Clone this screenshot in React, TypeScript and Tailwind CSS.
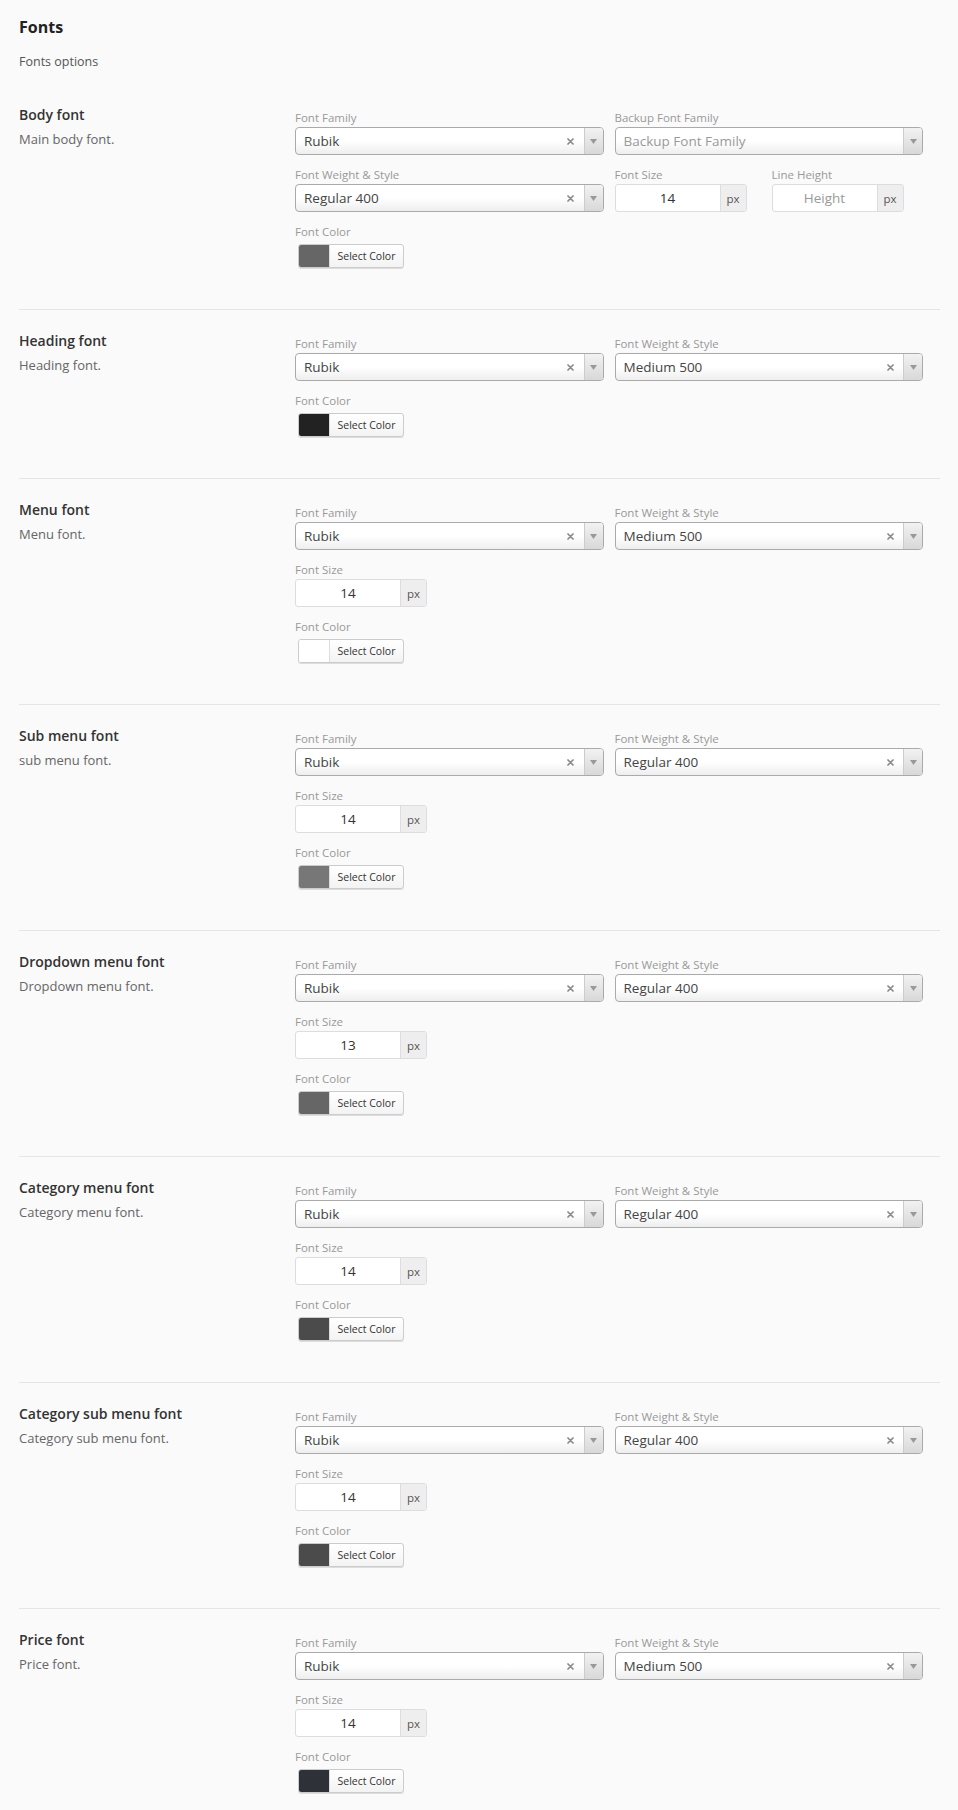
import { ReactNode } from 'react';

type Section = {
  title: string;
  desc: string;
  weight: string;
  size?: string;
  color: string;
};

const sections: Section[] = [
  { title: 'Heading font', desc: 'Heading font.', weight: 'Medium 500', color: '#222222' },
  { title: 'Menu font', desc: 'Menu font.', weight: 'Medium 500', size: '14', color: '#ffffff' },
  { title: 'Sub menu font', desc: 'sub menu font.', weight: 'Regular 400', size: '14', color: '#777777' },
  { title: 'Dropdown menu font', desc: 'Dropdown menu font.', weight: 'Regular 400', size: '13', color: '#666666' },
  { title: 'Category menu font', desc: 'Category menu font.', weight: 'Regular 400', size: '14', color: '#4b4b4b' },
  { title: 'Category sub menu font', desc: 'Category sub menu font.', weight: 'Regular 400', size: '14', color: '#4b4b4b' },
  { title: 'Price font', desc: 'Price font.', weight: 'Medium 500', size: '14', color: '#2e3238' },
];

function Field({ label, children }: { label: string; children: ReactNode }) {
  return (
    <div className="mb-[11px]">
      <div className="text-[11.5px] leading-[18px] text-[#999]">{label}</div>
      {children}
    </div>
  );
}

function Select({ value, placeholder = false, clear = true }: { value: string; placeholder?: boolean; clear?: boolean }) {
  return (
    <div className="flex h-[28px] items-stretch overflow-hidden rounded-[4px] border border-[#aaa] bg-[linear-gradient(to_bottom,#ffffff_50%,#eeeeee_100%)]">
      <span className={`flex-1 truncate pl-[8px] text-[13.5px] leading-[26px] ${placeholder ? 'text-[#999]' : 'text-[#444]'}`}>{value}</span>
      {clear && (
        <span className="flex w-[24px] items-center justify-center pt-[1px] pr-[2px]">
          <svg width="7" height="7" viewBox="0 0 7 7">
            <path d="M1 1l5 5M6 1l-5 5" stroke="#8a8a8a" strokeWidth="1.7" strokeLinecap="round" />
          </svg>
        </span>
      )}
      <span className="flex w-[19px] items-center justify-center border-l border-[#ccc] bg-[linear-gradient(to_bottom,#f2f2f2,#d8d8d8)]">
        <svg width="7" height="5" viewBox="0 0 7 5">
          <path d="M0 0h7L3.5 5z" fill="#999" />
        </svg>
      </span>
    </div>
  );
}

function PxInput({ value, placeholder = false }: { value: string; placeholder?: boolean }) {
  return (
    <div className="flex h-[28px] w-[132px] overflow-hidden rounded-[3px] border border-[#ddd] bg-white">
      <span className={`flex-1 text-center text-[13.5px] leading-[26px] ${placeholder ? 'text-[#999]' : 'text-[#333]'}`}>{value}</span>
      <span className="w-[26px] border-l border-[#ddd] bg-[#eee] text-center text-[11.5px] leading-[28px] text-[#555]">px</span>
    </div>
  );
}

function ColorButton({ color }: { color: string }) {
  return (
    <div className="ml-[3px] mt-[3px] flex h-[24px] w-[106px] overflow-hidden rounded-[3px] border border-[#ccc] bg-[linear-gradient(to_bottom,#ffffff,#f3f3f3)] shadow-[0_1px_0_#ddd]">
      <span className="w-[31px] border-r border-[#ddd]" style={{ backgroundColor: color }} />
      <span className="flex-1 text-center text-[10.5px] leading-[22px] text-[#333]">Select Color</span>
    </div>
  );
}

function Row({ title, desc, children, first = false }: { title: string; desc: string; children: ReactNode; first?: boolean }) {
  return (
    <div className={`flex border-b border-[#e5e5e5] pb-[30px] ${first ? 'pt-[35px]' : 'pt-[22px]'}`}>
      <div className="w-[276px] shrink-0">
        <div className="text-[14px] font-semibold leading-[18px] text-[#333]">{title}</div>
        <div className="mt-[6px] text-[13px] leading-[18px] text-[#666]">{desc}</div>
      </div>
      <div className="w-[628px] pt-[3px]">{children}</div>
    </div>
  );
}

export default function App() {
  return (
    <div className="min-h-screen bg-[#fafafa] pl-[19px] pr-[18px] font-['Open_Sans',sans-serif]">
      <div className="pt-[17px]">
        <h2 className="text-[16px] font-bold leading-[20px] text-[#222]">Fonts</h2>
        <p className="mt-[16px] text-[12.5px] leading-[18px] text-[#555]">Fonts options</p>
      </div>

      <Row title="Body font" desc="Main body font." first>
        <div className="grid grid-cols-2 gap-x-[11px]">
          <Field label="Font Family">
            <Select value="Rubik" />
          </Field>
          <Field label="Backup Font Family">
            <Select value="Backup Font Family" placeholder clear={false} />
          </Field>
          <Field label="Font Weight & Style">
            <Select value="Regular 400" />
          </Field>
          <div className="flex gap-[25px]">
            <Field label="Font Size">
              <PxInput value="14" />
            </Field>
            <Field label="Line Height">
              <PxInput value="Height" placeholder />
            </Field>
          </div>
        </div>
        <Field label="Font Color">
          <ColorButton color="#666666" />
        </Field>
      </Row>

      {sections.map((s) => (
        <Row key={s.title} title={s.title} desc={s.desc}>
          <div className="grid grid-cols-2 gap-x-[11px]">
            <Field label="Font Family">
              <Select value="Rubik" />
            </Field>
            <Field label="Font Weight & Style">
              <Select value={s.weight} />
            </Field>
          </div>
          {s.size && (
            <Field label="Font Size">
              <PxInput value={s.size} />
            </Field>
          )}
          <Field label="Font Color">
            <ColorButton color={s.color} />
          </Field>
        </Row>
      ))}
    </div>
  );
}
